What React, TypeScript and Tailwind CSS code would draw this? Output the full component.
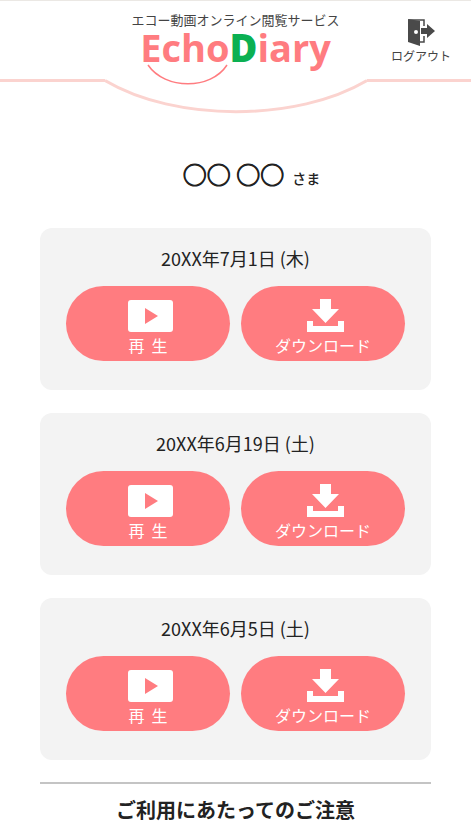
import React from 'react';

interface Recording {
  id: string;
  date: string;
}

const recordings: Recording[] = [
  { id: '0701', date: '20XX年7月1日 (木)' },
  { id: '0619', date: '20XX年6月19日 (土)' },
  { id: '0605', date: '20XX年6月5日 (土)' },
];

const LogoutIcon = () => (
  <svg width="28" height="28" viewBox="0 0 28 28" aria-hidden="true">
    <path d="M2 2h15v6M17 18v6h-6" fill="none" stroke="#4a4a4a" strokeWidth="1.500" />
    <path fillRule="evenodd" d="M1 1l12 2v25L1 24zM9 12a2 2 0 1 0 0 4 2 2 0 0 0 0-4z" fill="#4a4a4a" />
    <path d="M14 10h6V6l8 7-8 7v-4h-6z" fill="#4a4a4a" />
  </svg>
);

const PlayIcon = () => (
  <svg width="50" height="34" viewBox="0 0 50 34" aria-hidden="true">
    <rect x="5" y="1" width="45" height="32" rx="3" fill="#fff" />
    <path d="M22 9l13 8-13 8z" fill="#ff7c80" />
  </svg>
);

const DownloadIcon = () => (
  <svg width="50" height="34" viewBox="0 0 50 34" aria-hidden="true">
    <path d="M22 0h11v10h8L27.500 24 14 10h8z" fill="#fff" />
    <path d="M9 22h6v5h25v-5h6v11H9z" fill="#fff" />
  </svg>
);

function Header() {
  return (
    <header className="relative h-[114px] border-t border-[#ebe8e4]">
      {/* pink line that dips under the logo */}
      <div className="absolute inset-x-0 bottom-0 flex">
        <div className="mt-px h-[3px] flex-1 bg-[#fbd3cf]" />
        <svg width="262" height="36" viewBox="0 0 262 36" aria-hidden="true">
          <path d="M0 2.500C70 44 192 44 262 2.500" fill="none" stroke="#fbd3cf" strokeWidth="3" />
        </svg>
        <div className="mt-px h-[3px] flex-1 bg-[#fbd3cf]" />
      </div>

      <div className="relative grid grid-cols-[1fr_auto_1fr] items-start">
        <div />
        <div className="pt-[10px] text-center">
          <p className="text-[13px] leading-[18px] text-[#444]">エコー動画オンライン閲覧サービス</p>
          <h1 className="font-['Open_Sans','Noto_Sans',sans-serif] text-[38px] leading-[36px] font-bold text-[#ff7c80]">
            Echo<span className="font-extrabold text-[#0bb052]">D</span>iary
          </h1>
          <svg className="-mt-px ml-4" width="82" height="22" viewBox="0 0 82 22" aria-hidden="true">
            <path d="M1 1C18 26 64 26 80 1" fill="none" stroke="#ff7c80" strokeWidth="1.500" />
          </svg>
        </div>
        <a href="#logout" className="mt-[17px] mr-5 flex flex-col items-center justify-self-end text-xs leading-5 text-[#444]">
          <LogoutIcon />
          ログアウト
        </a>
      </div>
    </header>
  );
}

function RecordingCard({ recording }: { recording: Recording }) {
  const buttonClass =
    'flex h-[75px] flex-1 cursor-pointer flex-col items-center rounded-full bg-[#ff7c80] pt-[13px] text-base leading-6 text-white';

  return (
    <li className="rounded-xl bg-[#f3f3f3] px-[26px] pt-[18px] pb-[29px]">
      <h2 className="text-center text-lg leading-6 text-[#222]">{recording.date}</h2>
      <div className="mt-4 flex gap-[11px]">
        <button type="button" className={buttonClass}>
          <PlayIcon />
          <span>再{'\u00a0\u00a0'}生</span>
        </button>
        <button type="button" className={buttonClass}>
          <DownloadIcon />
          <span>ダウンロード</span>
        </button>
      </div>
    </li>
  );
}

export default function App() {
  return (
    <div className="min-h-screen bg-white font-['Noto_Sans_CJK_JP',sans-serif] text-[#222]">
      <Header />

      <main className="px-10">
        <p className="mt-[42px] flex items-baseline justify-center gap-2 pl-8 text-2xl leading-9">
          <span className="[-webkit-text-stroke:1px_#222]">○○ ○○</span>
          <span className="text-sm font-medium">さま</span>
        </p>

        <ul className="mt-9 flex flex-col gap-[23px]">
          {recordings.map((recording) => (
            <RecordingCard key={recording.id} recording={recording} />
          ))}
        </ul>

        <section className="mt-[22px] border-t-2 border-[#c4c4c4] pt-[11px]">
          <h2 className="text-center text-xl leading-[30px] font-bold">ご利用にあたってのご注意</h2>
        </section>
      </main>
    </div>
  );
}
